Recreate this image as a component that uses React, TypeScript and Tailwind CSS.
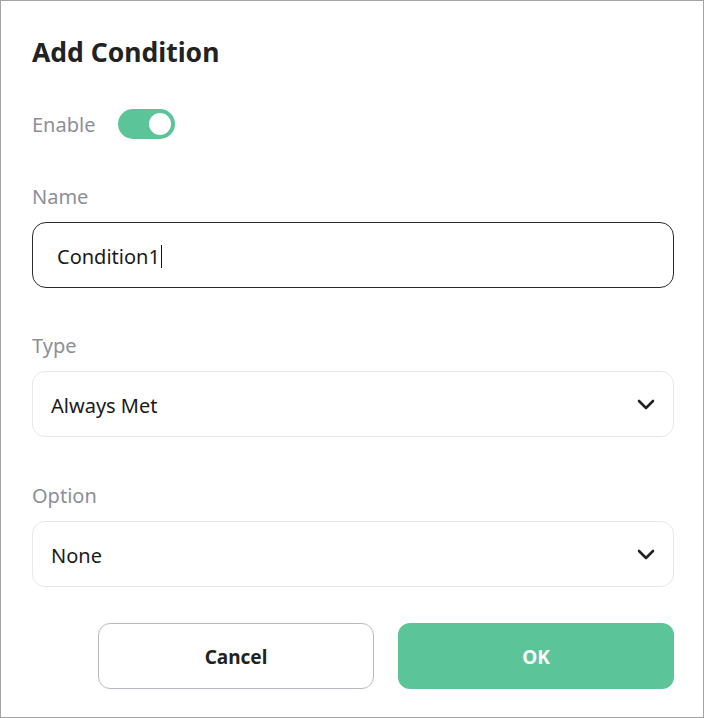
import React from 'react';

const font = { fontFamily: '"Noto Sans", "Open Sans", sans-serif' };

const Chevron = () => (
  <svg width="18" height="11" viewBox="0 0 18 11" fill="none" className="shrink-0">
    <path d="M2 2l7 7 7-7" stroke="#222" strokeWidth="2.6" strokeLinecap="round" strokeLinejoin="round" />
  </svg>
);

const Label = ({ children }: { children: React.ReactNode }) => (
  <div className="h-[28px] leading-[32px] text-[20px] text-[#8b9098]">{children}</div>
);

const Select = ({ value }: { value: string }) => (
  <div className="mt-[13px] h-[66px] rounded-[13px] border border-[#e8e8e8] bg-white flex items-center justify-between pl-[18px] pr-[18px]">
    <span className="pt-[3px] text-[20px] text-[#1a1a1a]">{value}</span>
    <Chevron />
  </div>
);

export default function App() {
  return (
    <div
      style={font}
      className="w-[704px] h-[718px] border border-[#a3a3a3] bg-white pl-[31px] pt-[33px] box-border"
    >
      <div className="w-[642px] flex flex-col">
        <h1 className="h-[36px] leading-[36px] text-[26.5px] font-bold text-[#222]">Add Condition</h1>

        <div className="mt-[39px] h-[30px] flex items-center gap-[23px]">
          <span className="pt-[2px] text-[20px] text-[#8b9098]">Enable</span>
          <div className="w-[57px] h-[30px] rounded-full bg-[#5bc599] flex items-center justify-end pr-[4px]">
            <div className="w-[22px] h-[22px] rounded-full bg-white" />
          </div>
        </div>

        <div className="mt-[42px]">
          <Label>Name</Label>
          <div className="mt-[13px] h-[66px] rounded-[14px] border border-[#2b2b2b] bg-white flex items-center pl-[24px]">
            <span className="pt-[3px] text-[20px] text-[#1a1a1a]">Condition1</span>
            <span className="ml-[1px] mt-[2px] w-[1px] h-[23px] bg-[#111]" />
          </div>
        </div>

        <div className="mt-[42px]">
          <Label>Type</Label>
          <Select value="Always Met" />
        </div>

        <div className="mt-[43px]">
          <Label>Option</Label>
          <Select value="None" />
        </div>

        <div className="mt-[36px] flex justify-end gap-[24px]">
          <button className="w-[276px] h-[66px] pt-[3px] rounded-[12px] border border-[#b7bbc1] bg-white text-[19px] font-bold text-[#222]">
            Cancel
          </button>
          <button className="w-[276px] h-[66px] pt-[3px] rounded-[12px] bg-[#5bc599] text-[19px] font-bold text-white">
            OK
          </button>
        </div>
      </div>
    </div>
  );
}
